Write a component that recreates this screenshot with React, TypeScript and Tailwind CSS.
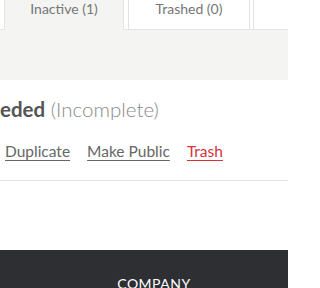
const tabs = [
    { label: "Inactive (1)", active: true, width: "w-[120px]", gap: "mr-1" },
    { label: "Trashed (0)", active: false, width: "w-[122px]", gap: "mr-[3px]" },
    { label: "", active: false, width: "flex-1 border-r-0", gap: "" },
]

const App = () => {
    return (
        <div className="w-[288px] h-[288px] overflow-hidden bg-white font-['Lato','Liberation_Sans',sans-serif]">
            {/* tab strip, cut at the top of the window */}
            <div className="-mt-[10px] flex h-[40px] border-b border-[#e3e4e2] pl-1">
                {tabs.map((tab, i) => (
                    <div
                        key={i}
                        className={`${tab.width} ${tab.gap} shrink-0 border border-[#e3e4e2] pt-[8px] text-center text-[14px] leading-[20px] text-[#767676] ${tab.active ? "h-[40px] bg-[#f4f5f3] border-b-[#f4f5f3]" : "h-[39px] bg-white border-b-0"}`}
                    >
                        {tab.label}
                    </div>
                ))}
            </div>
            <div className="h-[50px] bg-[#f4f5f3]" />

            <div className="mt-[15px] whitespace-nowrap text-[20.5px] leading-[28px]">
                <span className="font-bold text-[#555555]">eded</span>
                <span className="font-light text-[#8a8a8a]"> (Incomplete)</span>
            </div>

            <div className="mt-[17px] flex gap-[17px] pl-[5px] text-[15.5px] leading-[22px] whitespace-nowrap">
                <span className="text-[#666666] underline underline-offset-[3px]">Duplicate</span>
                <span className="text-[#666666] underline underline-offset-[3px]">Make Public</span>
                <span className="text-[#d3323a] underline underline-offset-[3px]">Trash</span>
            </div>

            <div className="mt-[18px] h-[70px] border-t border-[#e2e2e2]" />

            <div className="bg-[#2e2f33] pt-[24px] text-center">
                <div className="pl-[20px] text-[14px] leading-[20px] tracking-[0.5px] text-white">COMPANY</div>
            </div>
        </div>
    )
}

export default App
